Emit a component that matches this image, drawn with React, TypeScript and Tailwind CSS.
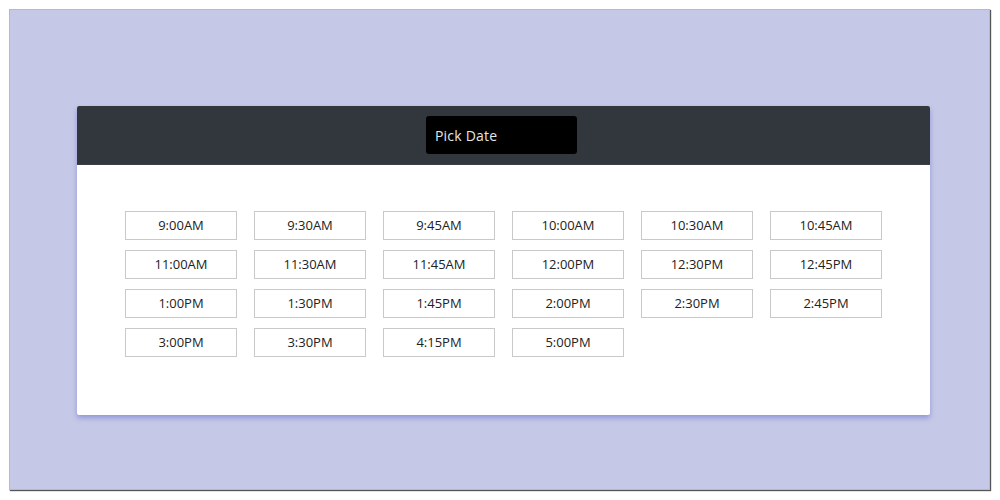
const times = [
  '9:00AM', '9:30AM', '9:45AM', '10:00AM', '10:30AM', '10:45AM',
  '11:00AM', '11:30AM', '11:45AM', '12:00PM', '12:30PM', '12:45PM',
  '1:00PM', '1:30PM', '1:45PM', '2:00PM', '2:30PM', '2:45PM',
  '3:00PM', '3:30PM', '4:15PM', '5:00PM',
]

export default function App() {
  return (
    <div
      className="w-[1000px] h-[500px] bg-white pt-[9px] pl-[9px]"
      style={{ fontFamily: '"Open Sans", "Noto Sans", sans-serif' }}
    >
      <div className="w-[981px] h-[481px] bg-[#c5c8e6] border border-[#b9b9c2] shadow-[1px_1px_1px_#555] pt-[96px] pl-[67px]">
        <div className="w-[853px] bg-white rounded-[2px] overflow-hidden shadow-[0_3px_5px_rgba(110,118,210,0.6)]">
          {/* header */}
          <div className="h-[59px] bg-[#31373d] flex justify-center items-start pt-[10px] pr-[4px] border-b border-[#3c4247]">
            <div className="w-[151px] h-[38px] bg-black rounded-[3px] px-[9px] flex items-center text-[14px] font-medium text-[#e6e6e6] tracking-[0.2px]">
              Pick Date
            </div>
          </div>

          {/* slots */}
          <div className="px-[48px] pt-[46px] pb-[58px] grid grid-cols-6 gap-x-[17px] gap-y-[10px]">
            {times.map(t => (
              <button
                key={t}
                className="h-[29px] border border-[#c9c9c9] bg-white text-[13px] text-[#222] flex items-center justify-center"
              >
                {t}
              </button>
            ))}
          </div>
        </div>
      </div>
    </div>
  )
}
